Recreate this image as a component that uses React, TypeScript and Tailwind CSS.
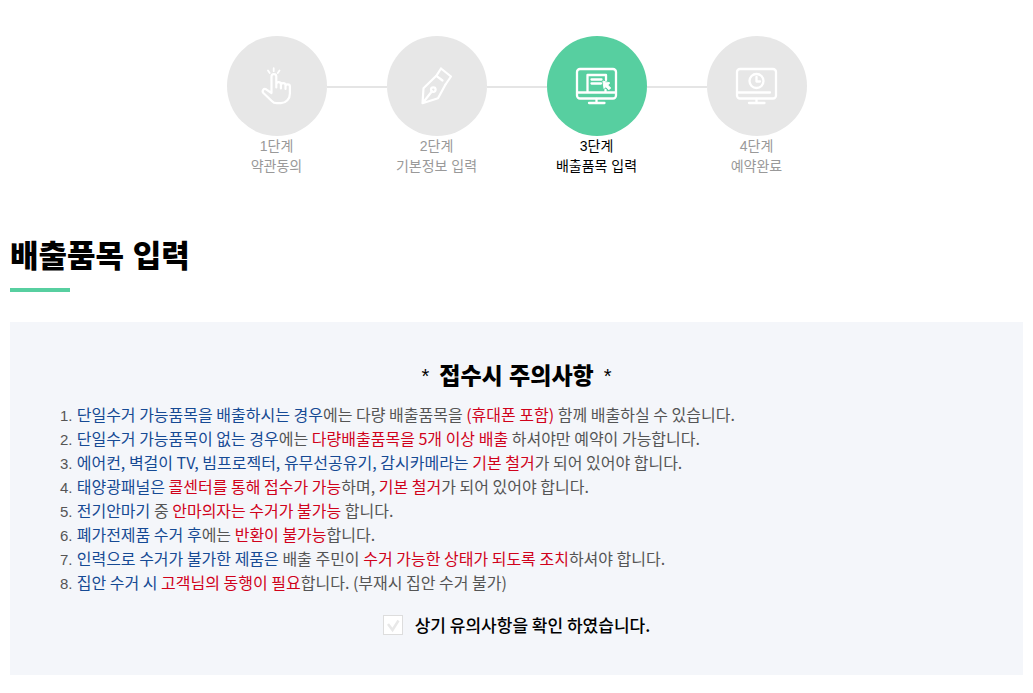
import { useState, type ReactNode } from 'react';

function TapIcon() {
  return (
    <svg viewBox="0 0 44 44" className="size-11" fill="none" stroke="currentColor" strokeWidth="2.2" strokeLinecap="round" strokeLinejoin="round" aria-hidden="true">
      <path d="M16.5 29V12.5a2.4 2.4 0 0 1 4.8 0v11M21.3 20.5a2.3 2.3 0 0 1 4.6 0v4M25.9 21.5a2.3 2.3 0 0 1 4.6 0v3.5M30.5 22.5a2.2 2.2 0 0 1 4.4 0v7a9.5 9.5 0 0 1-9 9.7h-4.300c-2 0-3.500-.8-4.800-2.200l-8.400-8c-1.900-2.200.4-5 2.700-3.700l5.400 3.700" />
      <path strokeWidth="1.8" d="M18.7 4.200v3M13 6.500l1.700 2.500M24.500 6.500l-1.700 2.500" />
    </svg>
  );
}

function PenIcon() {
  return (
    <svg viewBox="0 0 44 44" className="size-11" fill="none" stroke="currentColor" strokeWidth="2.2" strokeLinecap="round" strokeLinejoin="round" aria-hidden="true">
      <path d="M26 4.5 36 12.5 30.5 20.5M26 4.5 21.3 11.8 27.5 16.5" />
      <path d="M21.3 11.8 8.5 24.3 7.5 39.2 23 34.3 30.5 20.5M7.5 39.2 17 27.2" />
      <circle cx="18.3" cy="25.6" r="2.3" />
    </svg>
  );
}

function Monitor({ children }: { children: ReactNode }) {
  return (
    <svg viewBox="0 0 44 44" className="size-11" fill="none" stroke="currentColor" strokeWidth="2.3" strokeLinecap="round" strokeLinejoin="round" aria-hidden="true">
      <rect x="2" y="5" width="39" height="29.5" rx="3" />
      <path d="M21.5 35v4M14 39h15.5" />
      {children}
    </svg>
  );
}

function FormIcon() {
  return (
    <Monitor>
      <path d="M3 28.5h37M12.5 28V11h18.5v5M30.5 26v2.5M16.5 15.5h10M16.5 19.5h9.5" />
      <path fill="currentColor" strokeWidth="1" d="m28 17.5 1 7 1.8-1.800 3.200 3 1.700-1.700-3-3 1.900-1.800z" />
    </Monitor>
  );
}

function ClockIcon() {
  return (
    <Monitor>
      <path d="M3 28.5h32" />
      <circle cx="21.5" cy="17" r="7" />
      <path d="M21.5 13v4.5h3.5" />
    </Monitor>
  );
}

const steps = [
  { step: '1단계', name: '약관동의', icon: <TapIcon /> },
  { step: '2단계', name: '기본정보 입력', icon: <PenIcon /> },
  { step: '3단계', name: '배출품목 입력', icon: <FormIcon />, active: true },
  { step: '4단계', name: '예약완료', icon: <ClockIcon /> },
];

function Blue({ children }: { children: ReactNode }) {
  return <span className="text-[#164a94]">{children}</span>;
}

function Red({ children }: { children: ReactNode }) {
  return <span className="text-[#d0021b]">{children}</span>;
}

const notices: ReactNode[] = [
  <><Blue>단일수거 가능품목을 배출하시는 경우</Blue>에는 다량 배출품목을 <Red>(휴대폰 포함)</Red> 함께 배출하실 수 있습니다.</>,
  <><Blue>단일수거 가능품목이 없는 경우</Blue>에는 <Red>다량배출품목을 5개 이상 배출</Red> 하셔야만 예약이 가능합니다.</>,
  <><Blue>에어컨, 벽걸이 TV, 빔프로젝터, 유무선공유기, 감시카메라는</Blue> <Red>기본 철거</Red>가 되어 있어야 합니다.</>,
  <><Blue>태양광패널은</Blue> <Red>콜센터를 통해 접수가 가능</Red>하며, <Red>기본 철거</Red>가 되어 있어야 합니다.</>,
  <><Blue>전기안마기</Blue> 중 <Red>안마의자는 수거가 불가능</Red> 합니다.</>,
  <><Blue>폐가전제품 수거 후</Blue>에는 <Red>반환이 불가능</Red>합니다.</>,
  <><Blue>인력으로 수거가 불가한 제품은</Blue> 배출 주민이 <Red>수거 가능한 상태가 되도록 조치</Red>하셔야 합니다.</>,
  <><Blue>집안 수거 시</Blue> <Red>고객님의 동행이 필요</Red>합니다. (부재시 집안 수거 불가)</>,
];

export default function App() {
  const [checked, setChecked] = useState(false);

  return (
    <main className="bg-white px-[10px] pt-9 pb-4 font-['Liberation_Sans','Noto_Sans_CJK_KR',sans-serif] text-black">
      <ol className="flex justify-center">
        {steps.map((item, index) => (
          <li key={item.step} className="flex" aria-current={item.active ? 'step' : undefined}>
            {index > 0 && <span className="mt-[50px] h-[2px] w-[60px] bg-[#e5e5e5]" />}
            <div className={item.active ? 'flex w-[100px] flex-col items-center text-black' : 'flex w-[100px] flex-col items-center text-[#999]'}>
              <span className={item.active ? 'flex size-[100px] items-center justify-center rounded-full bg-[#57cfa0] text-white' : 'flex size-[100px] items-center justify-center rounded-full bg-[#e7e7e7] text-white'}>
                {item.icon}
              </span>
              <span className="text-center text-sm leading-5 whitespace-nowrap">
                {item.step}
                <br />
                {item.name}
              </span>
            </div>
          </li>
        ))}
      </ol>

      <h1 className="mt-[57px] text-[31px] leading-[48px] font-black">배출품목 입력</h1>
      <div className="mt-[7px] h-1 w-[60px] bg-[#57cfa0]" />

      <section className="mt-[30px] bg-[#f4f6fa] px-[50px] pt-9 pb-10">
        <h2 className="flex items-center justify-center gap-[10px] text-[23px] leading-9 font-black">
          <span className="text-xl font-normal">*</span>
          접수시 주의사항
          <span className="text-xl font-normal">*</span>
        </h2>
        <ol className="mt-[10px] text-[15px] leading-6 text-[#555]">
          {notices.map((notice, index) => (
            <li key={index}>
              {index + 1}.{' '}
              <span className="font-['Noto_Sans_CJK_KR',sans-serif] text-base leading-5">{notice}</span>
            </li>
          ))}
        </ol>
        <label className="mt-[19px] flex items-center justify-center gap-3 font-['Noto_Sans_CJK_KR',sans-serif] text-[17px] leading-5 font-medium">
          <span className="grid size-5 place-items-center">
            <input
              type="checkbox"
              checked={checked}
              onChange={(event) => setChecked(event.target.checked)}
              className="peer col-start-1 row-start-1 size-5 appearance-none border border-[#ddd] bg-white"
            />
            <svg viewBox="0 0 20 20" className="pointer-events-none col-start-1 row-start-1 size-5 text-[#e8e8e8] peer-checked:text-[#57cfa0]" fill="none" stroke="currentColor" strokeWidth="2.5" aria-hidden="true">
              <path d="m5 9 4.5 6 6-9.5" />
            </svg>
          </span>
          <span>상기 유의사항을 확인 하였습니다.</span>
        </label>
      </section>
    </main>
  );
}
